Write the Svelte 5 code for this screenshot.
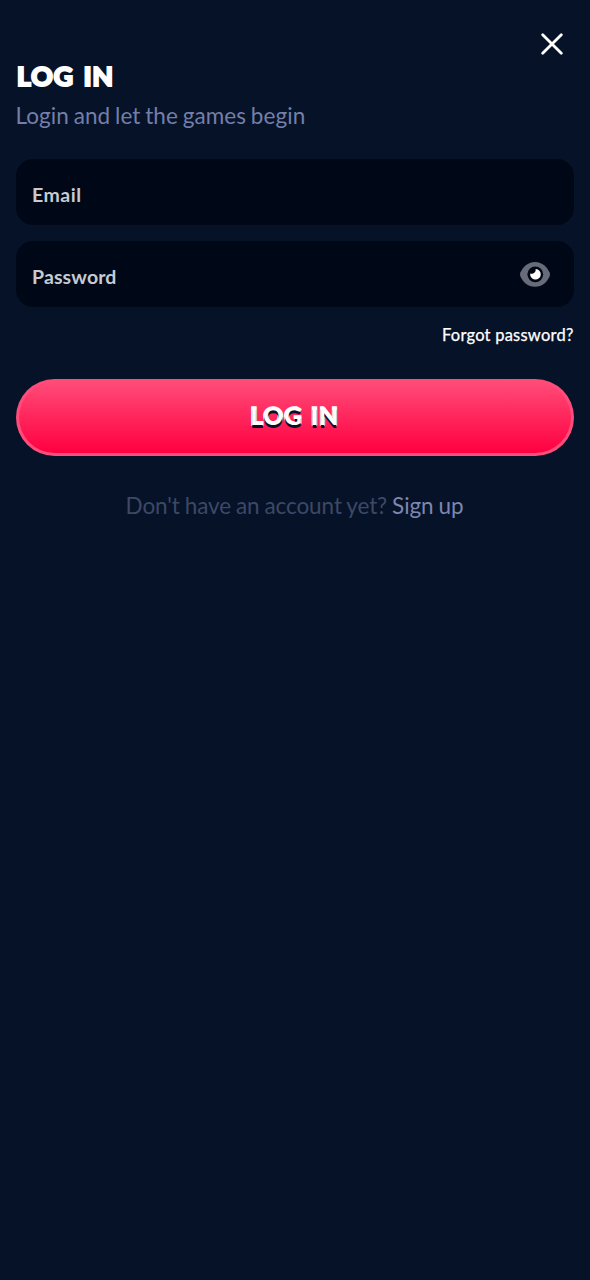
<script>
  let email = $state('');
  let password = $state('');
  let visible = $state(false);
</script>

<main class="screen">
  <header class="top">
    <button class="icon-button close" aria-label="Close">
      <svg width="22" height="22" viewBox="0 0 22 22" fill="none" stroke="#fff" stroke-width="2.8" stroke-linecap="round">
        <path d="M1.7 1.7 20.3 20.3M20.3 1.7 1.7 20.3" />
      </svg>
    </button>
  </header>

  <h1 class="title">LOG IN</h1>
  <p class="subtitle">Login and let the games begin</p>

  <form class="form" onsubmit={(e) => e.preventDefault()}>
    <label class="field">
      <span class="label email" class:hidden={email}>Email</span>
      <input type="email" bind:value={email} />
    </label>
    <label class="field">
      <span class="label" class:hidden={password}>Password</span>
      <input type={visible ? 'text' : 'password'} bind:value={password} />
      <button type="button" class="icon-button eye" aria-label="Show password" onclick={() => (visible = !visible)}>
        <svg width="30" height="25" viewBox="0 0 30 25">
          <path d="M15 0C22.500 0 27 5.300 29.500 10.300Q30.400 12.500 29.500 14.700C27 19.700 22.500 24.800 15 24.800S3 19.700.5 14.700Q-.4 12.500.5 10.300C3 5.300 7.500 0 15 0Z" fill="#686b79" />
          <circle cx="15.300" cy="12.300" r="7.900" fill="#000817" />
          <path d="M15.600 7A5.300 5.300 0 1 1 10.200 11.600C12.800 12.600 16.300 10.300 15.600 7Z" fill="#fff" />
        </svg>
      </button>
    </label>
    <a class="forgot" href="#forgot">Forgot password?</a>
    <button class="submit"><span>LOG IN</span></button>
  </form>

  <p class="signup"><span>Don't have an account yet?</span><a href="#signup">Sign up</a></p>
</main>

<style>
  :global(body) {
    background: #061228;
  }
  .screen {
    box-sizing: border-box;
    min-height: 1280px;
    padding: 0 16.500px 0 15.500px;
    background: #061228;
    font-family: Lato, "Liberation Sans", sans-serif;
    color: #fff;
  }
  a {
    text-decoration: none;
  }
  .icon-button {
    display: block;
    padding: 0;
    border: 0;
    background: none;
    line-height: 0;
    cursor: pointer;
  }
  .top {
    display: flex;
    justify-content: flex-end;
    align-items: flex-start;
    height: 61px;
    padding: 32.500px 10.500px 0 0;
    box-sizing: border-box;
  }
  .title {
    margin: 0;
    padding-left: 1.300px;
    height: 30px;
    font-size: 27px;
    line-height: 30px;
    font-weight: 900;
    letter-spacing: 0.7px;
    word-spacing: 2.500px;
    -webkit-text-stroke: 1.900px #fff;
    paint-order: stroke fill;
    stroke-linejoin: round;
    white-space: nowrap;
  }
  .subtitle {
    margin: 10px 0 0;
    height: 30px;
    font-size: 22.500px;
    line-height: 29px;
    letter-spacing: 0.060px;
    word-spacing: -1px;
    color: #747fa8;
    white-space: nowrap;
  }
  .form {
    display: flex;
    flex-direction: column;
    gap: 16px;
    margin-top: 28px;
  }
  .field {
    display: grid;
    grid-template-columns: 1fr auto;
    align-items: center;
    height: 66px;
    box-sizing: border-box;
    padding: 0 24px 0 16px;
    border-radius: 17px;
    background: #000817;
  }
  .field input {
    grid-area: 1 / 1;
    min-width: 0;
    height: 40px;
    padding: 0;
    border: 0;
    outline: 0;
    background: none;
    color: #fff;
    font: 700 19px Lato, sans-serif;
  }
  .label {
    grid-area: 1 / 1;
    padding: 6px 0 0 0.500px;
    font-size: 19.500px;
    line-height: 24px;
    font-weight: 700;
    letter-spacing: 0.120px;
    color: #c8cad0;
    pointer-events: none;
  }
  .email {
    letter-spacing: 0.500px;
  }
  .hidden {
    visibility: hidden;
  }
  .eye {
    grid-area: 1 / 2;
  }
  .forgot {
    align-self: flex-end;
    height: 22px;
    font-size: 16.500px;
    line-height: 24px;
    letter-spacing: 0.230px;
    white-space: nowrap;
    color: #fff;
    -webkit-text-stroke: 0.250px #fff;
  }
  .submit {
    height: 77px;
    margin-top: 18px;
    padding: 0 0 4px;
    border: 3px solid transparent;
    border-radius: 39px;
    background:
      linear-gradient(#ff4b78, #ff0040) padding-box,
      linear-gradient(#ff4b78, #ff4d7d) border-box;
    color: #fff;
    font: 900 24.500px/30px Lato, sans-serif;
    letter-spacing: 0.700px;
    word-spacing: 2px;
    -webkit-text-stroke: 1.700px #fff;
    paint-order: stroke fill;
    stroke-linejoin: round;
    text-shadow: 0 2.500px 0 #0b1028;
  }
  .signup {
    display: flex;
    justify-content: center;
    gap: 5px;
    margin: 35px 0 0;
    font-size: 22.500px;
    line-height: 30px;
    letter-spacing: -0.080px;
    word-spacing: -0.800px;
    white-space: nowrap;
    color: #3d4865;
  }
  .signup a {
    color: #7c87b0;
  }
</style>
